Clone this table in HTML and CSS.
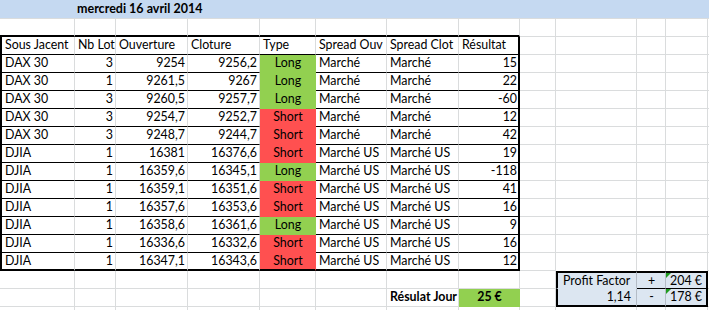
FILE: index.html
```html
<!DOCTYPE html>
<html lang="fr">
<head>
<meta charset="utf-8">
<title>Résultats 16 avril 2014</title>
<link rel="stylesheet" href="styles.css">
</head>
<body>
<div class="sheet">
  <div class="title">mercredi 16 avril 2014</div>

  <div class="cell above"></div><div class="cell above"></div><div class="cell above"></div><div class="cell above"></div><div class="cell above"></div><div class="cell above"></div><div class="cell above"></div><div class="cell above"></div><div class="cell"></div><div class="cell"></div><div class="cell"></div><div class="cell"></div><div class="cell"></div>

  <div class="cell tbl first">Sous Jacent</div><div class="cell tbl">Nb Lot</div><div class="cell tbl">Ouverture</div><div class="cell tbl">Cloture</div><div class="cell tbl">Type</div><div class="cell tbl">Spread Ouv</div><div class="cell tbl">Spread Clot</div><div class="cell tbl last">Résultat</div><div class="cell"></div><div class="cell"></div><div class="cell"></div><div class="cell"></div><div class="cell"></div>

  <div class="cell tbl first">DAX 30</div><div class="cell tbl num">3</div><div class="cell tbl num">9254</div><div class="cell tbl num">9256,2</div><div class="cell tbl type long">Long</div><div class="cell tbl">Marché</div><div class="cell tbl">Marché</div><div class="cell tbl num last">15</div><div class="cell"></div><div class="cell"></div><div class="cell"></div><div class="cell"></div><div class="cell"></div>

  <div class="cell tbl first">DAX 30</div><div class="cell tbl num">1</div><div class="cell tbl num">9261,5</div><div class="cell tbl num">9267</div><div class="cell tbl type long">Long</div><div class="cell tbl">Marché</div><div class="cell tbl">Marché</div><div class="cell tbl num last">22</div><div class="cell"></div><div class="cell"></div><div class="cell"></div><div class="cell"></div><div class="cell"></div>

  <div class="cell tbl first">DAX 30</div><div class="cell tbl num">3</div><div class="cell tbl num">9260,5</div><div class="cell tbl num">9257,7</div><div class="cell tbl type long">Long</div><div class="cell tbl">Marché</div><div class="cell tbl">Marché</div><div class="cell tbl num last">-60</div><div class="cell"></div><div class="cell"></div><div class="cell"></div><div class="cell"></div><div class="cell"></div>

  <div class="cell tbl first">DAX 30</div><div class="cell tbl num">3</div><div class="cell tbl num">9254,7</div><div class="cell tbl num">9252,7</div><div class="cell tbl type short">Short</div><div class="cell tbl">Marché</div><div class="cell tbl">Marché</div><div class="cell tbl num last">12</div><div class="cell"></div><div class="cell"></div><div class="cell"></div><div class="cell"></div><div class="cell"></div>

  <div class="cell tbl first">DAX 30</div><div class="cell tbl num">3</div><div class="cell tbl num">9248,7</div><div class="cell tbl num">9244,7</div><div class="cell tbl type short">Short</div><div class="cell tbl">Marché</div><div class="cell tbl">Marché</div><div class="cell tbl num last">42</div><div class="cell"></div><div class="cell"></div><div class="cell"></div><div class="cell"></div><div class="cell"></div>

  <div class="cell tbl first">DJIA</div><div class="cell tbl num">1</div><div class="cell tbl num">16381</div><div class="cell tbl num">16376,6</div><div class="cell tbl type short">Short</div><div class="cell tbl">Marché US</div><div class="cell tbl">Marché US</div><div class="cell tbl num last">19</div><div class="cell"></div><div class="cell"></div><div class="cell"></div><div class="cell"></div><div class="cell"></div>

  <div class="cell tbl first">DJIA</div><div class="cell tbl num">1</div><div class="cell tbl num">16359,6</div><div class="cell tbl num">16345,1</div><div class="cell tbl type long">Long</div><div class="cell tbl">Marché US</div><div class="cell tbl">Marché US</div><div class="cell tbl num last">-118</div><div class="cell"></div><div class="cell"></div><div class="cell"></div><div class="cell"></div><div class="cell"></div>

  <div class="cell tbl first">DJIA</div><div class="cell tbl num">1</div><div class="cell tbl num">16359,1</div><div class="cell tbl num">16351,6</div><div class="cell tbl type short">Short</div><div class="cell tbl">Marché US</div><div class="cell tbl">Marché US</div><div class="cell tbl num last">41</div><div class="cell"></div><div class="cell"></div><div class="cell"></div><div class="cell"></div><div class="cell"></div>

  <div class="cell tbl first">DJIA</div><div class="cell tbl num">1</div><div class="cell tbl num">16357,6</div><div class="cell tbl num">16353,6</div><div class="cell tbl type short">Short</div><div class="cell tbl">Marché US</div><div class="cell tbl">Marché US</div><div class="cell tbl num last">16</div><div class="cell"></div><div class="cell"></div><div class="cell"></div><div class="cell"></div><div class="cell"></div>

  <div class="cell tbl first">DJIA</div><div class="cell tbl num">1</div><div class="cell tbl num">16358,6</div><div class="cell tbl num">16361,6</div><div class="cell tbl type long">Long</div><div class="cell tbl">Marché US</div><div class="cell tbl">Marché US</div><div class="cell tbl num last">9</div><div class="cell"></div><div class="cell"></div><div class="cell"></div><div class="cell"></div><div class="cell"></div>

  <div class="cell tbl first">DJIA</div><div class="cell tbl num">1</div><div class="cell tbl num">16336,6</div><div class="cell tbl num">16332,6</div><div class="cell tbl type short">Short</div><div class="cell tbl">Marché US</div><div class="cell tbl">Marché US</div><div class="cell tbl num last">16</div><div class="cell"></div><div class="cell"></div><div class="cell"></div><div class="cell"></div><div class="cell"></div>

  <div class="cell tbl end first">DJIA</div><div class="cell tbl end num">1</div><div class="cell tbl end num">16347,1</div><div class="cell tbl end num">16343,6</div><div class="cell tbl end type short">Short</div><div class="cell tbl end">Marché US</div><div class="cell tbl end">Marché US</div><div class="cell tbl end num last">12</div><div class="cell"></div><div class="cell above-box"></div><div class="cell above-box"></div><div class="cell above-box"></div><div class="cell"></div>

  <div class="cell"></div><div class="cell"></div><div class="cell"></div><div class="cell"></div><div class="cell"></div><div class="cell"></div><div class="cell"></div><div class="cell"></div><div class="cell"></div><div class="cell pf pf-top pf-label">Profit Factor</div><div class="cell pf pf-top pf-sign">+</div><div class="cell pf pf-top pf-value flag">204 €</div><div class="cell"></div>

  <div class="cell"></div><div class="cell"></div><div class="cell"></div><div class="cell"></div><div class="cell"></div><div class="cell"></div><div class="cell day-label">Résulat Jour</div><div class="cell day-total">25 €</div><div class="cell"></div><div class="cell pf pf-bottom pf-label num">1,14</div><div class="cell pf pf-bottom pf-sign">-</div><div class="cell pf pf-bottom pf-value flag">178 €</div><div class="cell"></div>

  <div class="cell"></div><div class="cell"></div><div class="cell"></div><div class="cell"></div><div class="cell"></div><div class="cell"></div><div class="cell"></div><div class="cell"></div><div class="cell"></div><div class="cell"></div><div class="cell"></div><div class="cell"></div><div class="cell"></div>
</div>
</body>
</html>
```

FILE: styles.css
```css
html, body {
  margin: 0;
  padding: 0;
  background: #ffffff;
}

body {
  font-family: "Lato", "Liberation Sans", sans-serif;
  font-size: 12.4px;
  color: #000000;
  overflow: hidden;
}

.sheet {
  display: grid;
  grid-template-columns: 75px 41px 72px 72px 56px 71px 72px 61px 36px 81px 29px 42px 1fr;
  grid-template-rows: 19px;
  grid-auto-rows: 18px;
  width: 709px;
  height: 310px;
  overflow: hidden;
}

.title {
  grid-column: 1 / -1;
  background: #c5d9f1;
  border-bottom: 1px solid #dadcdd;
  padding-left: 77px;
  font-weight: bold;
  font-size: 12.5px;
  line-height: 17px;
  white-space: nowrap;
}

.cell {
  box-sizing: border-box;
  border-right: 1px solid #dadcdd;
  border-bottom: 1px solid #dadcdd;
  padding: 0 2px 0 3px;
  line-height: 16px;
  white-space: nowrap;
  overflow: hidden;
}

.num {
  text-align: right;
}

.above {
  border-bottom: 2px solid #000000;
}

.tbl {
  border-bottom-color: #000000;
}

.first {
  border-left: 2px solid #000000;
}

.last {
  border-right: 2px solid #000000;
  padding-right: 1px;
}

.type {
  text-align: center;
}

.long {
  background: #92d050;
  border-right-color: #92d050;
  border-bottom-color: #92d050;
}

.short {
  background: #ff5050;
  border-right-color: #ff5050;
  border-bottom-color: #ff5050;
}

.cell.tbl.end {
  border-bottom: 2px solid #000000;
}

.above-box {
  border-bottom: none;
}

.pf {
  background: #dce6f1;
  border-right-color: #b4bcc6;
}

.pf-top {
  border-top: 2px solid #000000;
  border-bottom: 1px solid #000000;
}

.pf-bottom {
  border-bottom: 2px solid #000000;
}

.pf-top.pf-label {
  border-bottom-color: #dce6f1;
}

.pf-label {
  border-left: 2px solid #000000;
  padding-left: 5px;
}

.pf-label.num {
  padding-right: 5px;
}

.pf-sign {
  text-align: center;
}

.pf-value {
  text-align: right;
  border-right: 2px solid #000000;
  padding-right: 4px;
}

.flag {
  position: relative;
}

.flag::before {
  content: "";
  position: absolute;
  left: 0;
  top: 0;
  border-top: 5px solid #1f9b1f;
  border-right: 5px solid transparent;
}

.day-label {
  font-weight: bold;
  text-align: right;
  padding-right: 3px;
}

.day-total {
  font-weight: bold;
  text-align: center;
  background: #92d050;
  border-right-color: #92d050;
  border-bottom-color: #92d050;
}
```
